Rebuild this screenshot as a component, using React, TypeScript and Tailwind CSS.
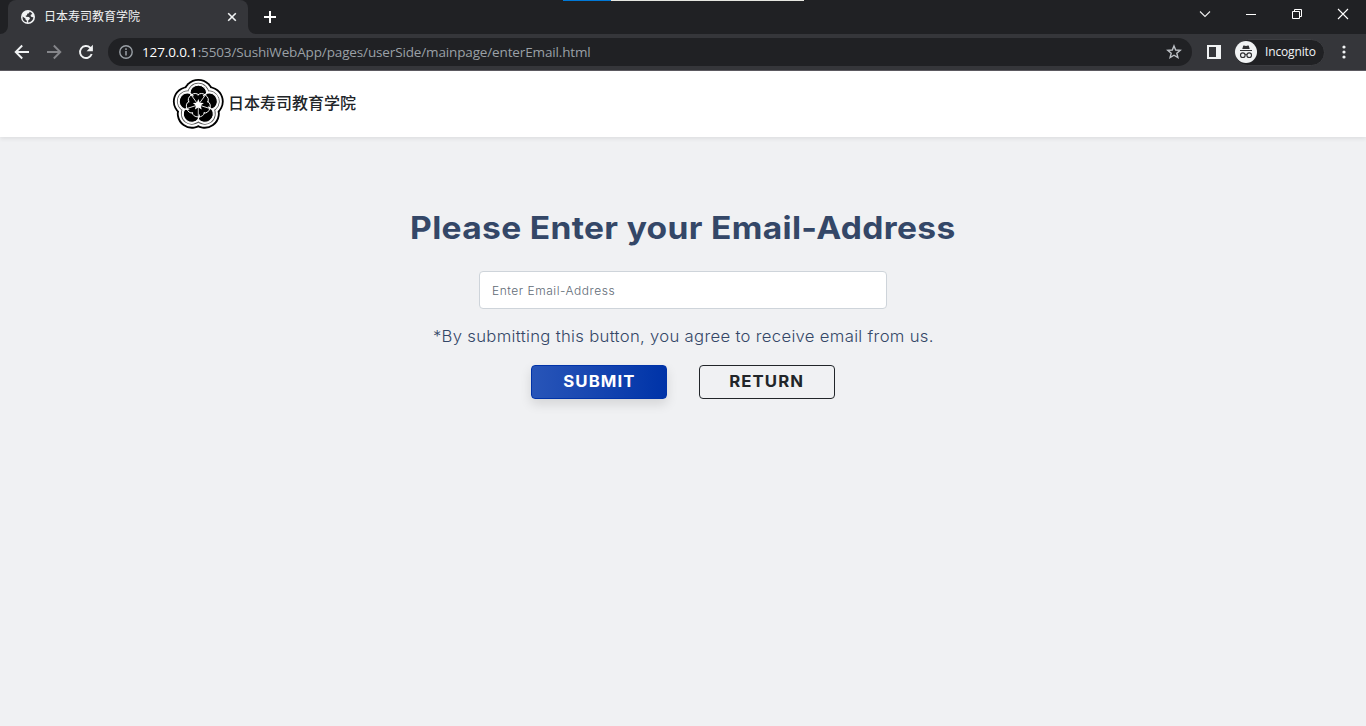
const petals = [0, 72, 144, 216, 288];

function Lobes({ d, r, fill }: { d: number; r: number; fill: string }) {
  return (
    <g fill={fill}>
      <circle r={d} />
      {petals.map((a) => (
        <circle key={a} cy={-d} r={r} transform={`rotate(${a})`} />
      ))}
    </g>
  );
}

function Emblem() {
  return (
    <svg width="52" height="52" viewBox="-26.3 -26.8 52 52" className="shrink-0">
      <Lobes d={10.8} r={15.1} fill="#000" />
      <Lobes d={10.8} r={13.3} fill="#fff" />
      <Lobes d={11.1} r={10.9} fill="#555" />
      <Lobes d={11.1} r={10.1} fill="#fff" />
      {petals.map((a) => (
        <ellipse key={a} cy="-11.8" rx="8.3" ry="7.8" transform={`rotate(${a})`} fill="#000" stroke="#fff" strokeWidth="1" />
      ))}
      <circle r="10" fill="#000" />
      {petals.map((a) => (
        <path
          key={a}
          d="M-6.2 -7.5A6.3 5.6 0 0 1 6.2 -7.5"
          transform={`rotate(${a + 36})`}
          fill="none"
          stroke="#fff"
          strokeWidth="0.9"
        />
      ))}
      {petals.map((a) => (
        <path key={a} d="M0 0V14" stroke="#fff" strokeWidth="0.8" transform={`rotate(${a})`} />
      ))}
      <path
        fill="#fff"
        d="M0 -5.8 L1.5 -2.1 L5.5 -1.8 L2.4 .8 L3.4 4.7 L0 2.6 L-3.4 4.7 L-2.4 .8 L-5.5 -1.8 L-1.5 -2.1Z"
      />
    </svg>
  );
}

function Globe() {
  return (
    <svg width="14" height="14" viewBox="0 0 14 14" className="shrink-0">
      <circle cx="7" cy="7" r="7" fill="#f1f3f4" />
      <path
        fill="#35363a"
        d="M8.6 1.8 8 3.2 6.2 3.8 6 5.2 4.6 5.8 5 6.8 8 7 9 8.2 8.4 9.6 7.2 10.4 7.2 12.4A5.4 5.4 0 0 0 12.4 7.2L10.6 7 9.6 6 9.8 4.8 11.4 4A5.4 5.4 0 0 0 8.6 1.8ZM1.6 6.4A5.4 5.4 0 0 0 5.8 12.3L5.9 10.8 4.6 9.8 4.4 8.6Z"
      />
    </svg>
  );
}

function TabBar() {
  return (
    <div className="flex h-[34px] bg-[#202124]">
      <div className="relative ml-2 flex w-[240px] items-center rounded-t-lg bg-[#35363a] pl-[13px]">
        <Globe />
        <span className="ml-[9px] w-[180px] pb-[2px] text-[12px] leading-4 text-[#f1f3f4] font-['Noto_Sans_CJK_SC',sans-serif]">日本寿司教育学院</span>
        <svg width="10" height="10" viewBox="0 0 10 10" className="ml-[3px] shrink-0">
          <path d="M1.2 1.2 8.8 8.8M8.8 1.2 1.2 8.8" stroke="#f1f3f4" strokeWidth="1.6" />
        </svg>
        <svg width="8" height="8" viewBox="0 0 8 8" className="absolute bottom-0 -left-2">
          <path d="M8 0V8H0A8 8 0 0 0 8 0Z" fill="#35363a" />
        </svg>
        <svg width="8" height="8" viewBox="0 0 8 8" className="absolute -right-2 bottom-0">
          <path d="M0 0V8H8A8 8 0 0 1 0 0Z" fill="#35363a" />
        </svg>
      </div>
      <svg width="12" height="12" viewBox="0 0 12 12" className="mt-[11px] ml-4 shrink-0">
        <path d="M6 0V12M0 6H12" stroke="#fff" strokeWidth="2" />
      </svg>
      <div className="ml-[287px] flex h-px">
        <div className="w-12 bg-[#0078d7]" />
        <div className="w-[193px] bg-[#e6e6e0]" />
      </div>
      <div className="mr-[17px] ml-auto flex h-7 items-center gap-[34px]">
        <svg width="12" height="12" viewBox="0 0 12 12" fill="none">
          <path d="M1 3.5 6 8.5 11 3.5" stroke="#eee" strokeWidth="1.1" />
        </svg>
        <svg width="12" height="12" viewBox="0 0 12 12" fill="none">
          <path d="M1 6.5H11" stroke="#fff" />
        </svg>
        <svg width="12" height="12" viewBox="0 0 12 12" fill="none">
          <path d="M1.5 3.5h7v7h-7ZM3.5 3.5v-2h7v7h-2" stroke="#fff" />
        </svg>
        <svg width="12" height="12" viewBox="0 0 12 12" fill="none">
          <path d="M1 1 11 11M11 1 1 11" stroke="#fff" strokeWidth="1.1" />
        </svg>
      </div>
    </div>
  );
}

function Toolbar() {
  return (
    <div className="flex h-[37px] items-center border-b border-[#5c5a61] bg-[#35363a] pl-[14px]">
      <svg width="16" height="16" viewBox="0 0 16 16" fill="none" className="shrink-0">
        <path d="M15 8H2M8.2 1.5 1.7 8 8.2 14.5" stroke="#f1f3f4" strokeWidth="1.9" />
      </svg>
      <svg width="16" height="16" viewBox="0 0 16 16" fill="none" className="ml-4 shrink-0">
        <path d="M1 8H14M7.8 1.5 14.3 8 7.8 14.5" stroke="#85868a" strokeWidth="1.9" />
      </svg>
      <svg width="16" height="16" viewBox="0 0 16 16" fill="none" className="ml-4 shrink-0">
        <path d="M13.7 10A6 6 0 1 1 12.2 3.7L14 5.5" stroke="#f1f3f4" strokeWidth="1.9" />
        <path d="M14.9 .8V7.2H8.6Z" fill="#f1f3f4" />
      </svg>
      <div className="ml-[14px] flex h-7 w-[1084px] items-center rounded-full bg-[#202124] pr-[10px] pl-[11px]">
        <svg width="14" height="14" viewBox="0 0 14 14" fill="none" className="shrink-0">
          <circle cx="7" cy="7" r="6.2" stroke="#9aa0a6" strokeWidth="1.4" />
          <path d="M7 6V10.5M7 3.3V4.9" stroke="#9aa0a6" strokeWidth="1.5" />
        </svg>
        <span className="ml-[9px] text-[13.5px] leading-5 tracking-[-0.14px] whitespace-nowrap text-[#9aa0a6] font-['Open_Sans',sans-serif]">
          <span className="text-white">127.0.0.1</span>:5503/SushiWebApp/pages/userSide/mainpage/enterEmail.html
        </span>
        <svg width="16" height="16" viewBox="0 0 16 16" fill="none" className="ml-auto shrink-0">
          <path d="M8 1.9 9.7 6 14.2 6.3 10.8 9.2 11.9 13.6 8 11.2 4.1 13.6 5.2 9.2 1.8 6.3 6.3 6Z" stroke="#bdc1c6" strokeWidth="1.4" />
        </svg>
      </div>
      <svg width="14" height="14" viewBox="0 0 14 14" className="ml-[15px] shrink-0">
        <path d="M0 0H14V14H0ZM2 2V12H9V2Z" fill="#f1f3f4" fillRule="evenodd" />
      </svg>
      <div className="ml-[13px] flex h-[27px] w-[91px] items-center rounded-full border border-[#3c3d41] bg-[#202124]">
        <svg width="22" height="22" viewBox="0 0 22 22" className="shrink-0">
          <circle cx="11" cy="11" r="11" fill="#f1f3f4" />
          <path d="M7.3 8 8.2 4.8Q8.4 4.3 9 4.5L11 5 13 4.5Q13.6 4.3 13.8 4.8L14.7 8ZM5 9H17V10H5Z" fill="#303134" />
          <g fill="none" stroke="#303134" strokeWidth="1.1">
            <circle cx="7.8" cy="14.2" r="2.3" />
            <circle cx="14.2" cy="14.2" r="2.3" />
            <path d="M10 13.9Q11 13.2 12 13.9" />
          </g>
        </svg>
        <span className="ml-2 text-[12px] leading-4 tracking-[-0.15px] text-[#f1f3f4] font-['Open_Sans',sans-serif]">Incognito</span>
      </div>
      <svg width="4" height="14" viewBox="0 0 4 14" className="ml-[17px] shrink-0" fill="#f1f3f4">
        <circle cx="2" cy="2" r="1.6" />
        <circle cx="2" cy="7" r="1.6" />
        <circle cx="2" cy="12" r="1.6" />
      </svg>
    </div>
  );
}

export default function App() {
  return (
    <div className="flex h-[726px] w-[1366px] flex-col overflow-hidden bg-[#f0f1f3]">
      <TabBar />
      <Toolbar />
      <header className="flex h-[66px] shrink-0 items-center bg-white pl-[172px] shadow-[0_2px_4px_rgba(0,0,0,0.075)]">
        <Emblem />
        <span className="ml-1 pb-[5px] text-[16px] leading-6 font-medium text-[#212529] font-['Noto_Sans_CJK_SC',sans-serif]">日本寿司教育学院</span>
      </header>
      <main className="flex flex-col items-center pt-[71px] font-['Inter',sans-serif] text-[#344767]">
        <h1 className="scale-x-[1.083] text-[31px] leading-10 font-bold tracking-[0.3px] whitespace-nowrap">Please Enter your Email-Address</h1>
        <input
          type="email"
          placeholder="Enter Email-Address"
          className="mt-[23px] h-[38px] w-[408px] rounded-[4px] border border-[#ced4da] bg-white px-[12px] text-[12px] tracking-[0.53px] placeholder:font-light placeholder:text-[#5f6b76]"
        />
        <p className="mt-[15px] scale-x-[1.042] text-[16px] leading-6 font-light tracking-[0.3px] whitespace-nowrap">*By submitting this button, you agree to receive email from us.</p>
        <div className="mt-[17px] flex gap-8">
          <button className="h-[34px] w-[136px] rounded-[4px] border border-[#0033a8] bg-linear-to-r from-[#2855b8] to-[#0033a8] pb-px text-[15.5px] font-bold text-white shadow-[0_5px_12px_rgba(0,0,0,0.12)]">
            <span className="inline-block scale-x-[1.08] tracking-[1px]">SUBMIT</span>
          </button>
          <button className="h-[34px] w-[136px] rounded-[4px] border border-[#212529] pb-px text-[15.5px] font-bold text-[#212529]">
            <span className="inline-block scale-x-[1.08] tracking-[1px]">RETURN</span>
          </button>
        </div>
      </main>
    </div>
  );
}
